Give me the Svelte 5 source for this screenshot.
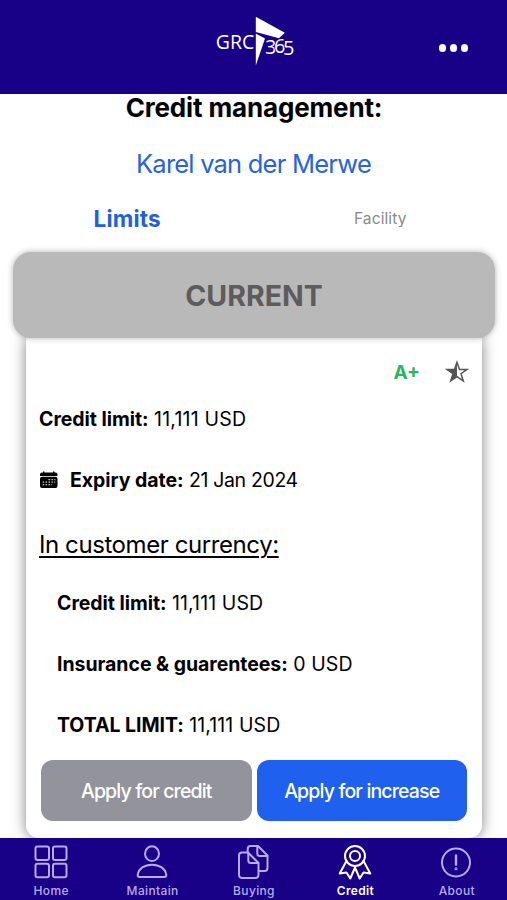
<script lang="ts">
    interface Row {
        label: string;
        value: string;
    }

    const customer = 'Karel van der Merwe';
    const tabs = ['Home', 'Maintain', 'Buying', 'Credit', 'About'];

    const currencyRows: Row[] = [
        { label: 'Credit limit:', value: '11,111 USD' },
        { label: 'Insurance & guarentees:', value: '0 USD' },
        { label: 'TOTAL LIMIT:', value: '11,111 USD' }
    ];

    let section = $state('Limits');
    let activeTab = $state('Credit');
</script>

<div class="app">
    <header class="toolbar">
        <svg class="logo" width="84" height="54" viewBox="0 0 84 54" aria-label="GRC 365">
            <path d="M43.8 2.7L72.8 18.7L67 24.3L43.8 18Z" fill="#fff" />
            <path d="M43.8 19.5L53 24.5L43.8 51.5Z" fill="#fff" />
            <text class="logo-text" x="3.8" y="35.2" font-size="20.3" textLength="38.5" lengthAdjust="spacingAndGlyphs">GRC</text>
            <text class="logo-text numbers" x="53" y="40.3" dy="0 -1.8 2.3" font-size="20" textLength="29.5" lengthAdjust="spacing">365</text>
        </svg>
        <button class="menu" aria-label="Menu">
            <i></i><i></i><i></i>
        </button>
    </header>

    <main>
        <h1>Credit management:</h1>
        <h2 class="customer">{customer}</h2>

        <div class="sections">
            <button class:selected={section === 'Limits'} onclick={() => (section = 'Limits')}>Limits</button>
            <button class:selected={section === 'Facility'} onclick={() => (section = 'Facility')}>Facility</button>
        </div>

        <div class="status">CURRENT</div>
        <section class="card">
            <div class="rating">
                <span class="grade">A+</span>
                <svg width="24" height="24" viewBox="0 0 24 24">
                    <path d="M12 2.3L14.5 9.4H22L16 13.7L18.3 20.9L12 16.6L5.7 20.9L8 13.7L2 9.4H9.5Z" fill="none" stroke="#555" stroke-width="1.5" />
                    <path d="M12 2.3V16.6L5.7 20.9L8 13.7L2 9.4H9.5Z" fill="#555" />
                </svg>
            </div>

            <div class="row"><b>Credit limit:</b><span>11,111 USD</span></div>
            <div class="row expiry">
                <svg width="20" height="20" viewBox="0 0 20 20">
                    <path d="M1 6V4.5Q1 2.5 3 2.5H4V1.5H5.5V2.5H14V1.5H15.5V2.5H16.5Q18.5 2.5 18.5 4.5V6Z" />
                    <rect x="1" y="6.8" width="17.5" height="11.2" rx="2" />
                    <path d="M9.5 9.7h6.8M3.7 12.2h12.6M3.7 14.7h9.4" stroke="#ccc" stroke-width="1.3" stroke-dasharray="1.5 1.4" />
                </svg>
                <b>Expiry date:</b><span class="date">21 Jan 2024</span>
            </div>
            <h3>In customer currency:</h3>

            {#each currencyRows as row}
                <div class="row inset"><b>{row.label}</b><span>{row.value}</span></div>
            {/each}

            <div class="actions">
                <button class="credit">Apply for credit</button>
                <button class="increase">Apply for increase</button>
            </div>
        </section>
    </main>

    <nav>
        {#each tabs as tab}
            <button class:active={activeTab === tab} onclick={() => (activeTab = tab)}>
                <svg width="36" height="36" viewBox="0 0 36 36">
                    {#if tab === 'Home'}
                        <rect x="2.5" y="1.5" width="13.5" height="13.5" rx="2" />
                        <rect x="20" y="1.5" width="13.5" height="13.5" rx="2" />
                        <rect x="2.5" y="18.7" width="13.5" height="13.5" rx="2" />
                        <rect x="20" y="18.7" width="13.5" height="13.5" rx="2" />
                    {:else if tab === 'Maintain'}
                        <ellipse cx="18" cy="8.7" rx="7" ry="7.4" />
                        <path d="M5.5 32H30.5Q32.3 32 32.3 30C31.5 23.5 25.5 19.7 18 19.7S4.5 23.5 3.7 30Q3.7 32 5.5 32Z" />
                    {:else if tab === 'Buying'}
                        <path d="M7 7.5H13L23.5 18V29.5Q23.5 33 20 33H7.5Q4 33 4 29.5V10.5Q4 7.5 7 7.5Z" />
                        <path d="M13.3 7.7V15.5Q13.3 18 15.8 18H23.3" />
                        <path d="M12.7 7.3V4Q12.7 1 15.7 1H23L32.5 10.5V23Q32.5 26 29.5 26H23.7" />
                        <path d="M22.3 1.2V8.5Q22.3 11 24.8 11H32.3" />
                    {:else if tab === 'Credit'}
                        <circle cx="18" cy="11" r="10" />
                        <circle cx="18" cy="11" r="5" />
                        <path d="M9.5 16L2.7 28.5L9.5 27.5L13.3 33.5L18 22.5L22.7 33.5L26.5 27.5L33.3 28.5L26.5 16" />
                    {:else}
                        <circle cx="18" cy="17.5" r="14" />
                        <path d="M18 10.5V19.5" stroke-width="2.4" />
                        <circle cx="18" cy="23.8" r=".5" />
                    {/if}
                </svg>
                <span>{tab}</span>
            </button>
        {/each}
    </nav>
</div>

<style>
    :global(body) {
        margin: 0;
        background: #fff;
    }

    .app {
        display: flex;
        flex-direction: column;
        height: 900px;
        overflow: hidden;
        font-family: Inter, "Liberation Sans", sans-serif;
        color: #000;
    }

    button {
        border: 0;
        padding: 0;
        background: none;
        font-family: inherit;
        color: inherit;
    }

    .toolbar {
        flex: none;
        display: grid;
        grid-template-columns: 1fr 84px 1fr;
        height: 94px;
        padding-top: 14px;
        box-sizing: border-box;
        background: #180087;
    }

    .logo {
        grid-column: 2;
    }

    .logo-text {
        fill: #fff;
        font-family: "Open Sans", sans-serif;
    }

    .numbers {
        stroke: #180087;
        stroke-width: 1.5px;
        paint-order: stroke;
    }

    .menu {
        justify-self: end;
        display: flex;
        gap: 3.5px;
        height: 68px;
        align-items: center;
        margin-right: 39px;
    }

    .menu i {
        width: 7.5px;
        height: 7.5px;
        border-radius: 50%;
        background: #fff;
    }

    main {
        flex: 1;
        min-height: 0;
    }

    h1 {
        margin: 0;
        padding-left: 1px;
        line-height: 28px;
        font-size: 26px;
        font-weight: 700;
        text-align: center;
        letter-spacing: -0.15px;
    }

    .customer {
        margin: 18px 0 0;
        line-height: 48px;
        font-size: 25.5px;
        font-weight: 400;
        letter-spacing: -0.78px;
        text-align: center;
        color: #2563e0;
    }

    .sections {
        display: grid;
        grid-template-columns: 1fr 1fr;
        height: 60px;
        margin-bottom: 4px;
    }

    .sections button {
        font-size: 15.5px;
        letter-spacing: 0.1px;
        color: #888;
    }

    .sections .selected {
        padding-left: 1px;
        font-size: 22.5px;
        font-weight: 700;
        letter-spacing: 0.2px;
        color: #2060e0;
    }

    .status {
        position: relative;
        margin: 0 12px 0 13px;
        line-height: 88px;
        height: 86px;
        border-radius: 18px;
        background: #b9b9b9;
        box-shadow: 0 0 6px rgba(0, 0, 0, 0.3);
        text-align: center;
        font-size: 28.5px;
        font-weight: 700;
        color: #5c5c5c;
    }

    .card {
        height: 500px;
        box-sizing: border-box;
        margin: 0 25px 0 26px;
        padding: 17px 13px 0;
        border-radius: 0 0 13px 13px;
        background: #fff;
        box-shadow: 0 0 14px rgba(0, 0, 0, 0.5);
    }

    .rating {
        display: flex;
        justify-content: flex-end;
        align-items: center;
        gap: 25px;
        height: 34px;
    }

    .grade {
        font-size: 19px;
        font-weight: 700;
        color: #28b463;
    }

    .row {
        display: flex;
        align-items: center;
        gap: 5.5px;
        height: 60px;
        padding-bottom: 1px;
        font-size: 19.5px;
        letter-spacing: 0.22px;
        white-space: nowrap;
    }

    .row b {
        font-weight: 650;
        letter-spacing: -0.05px;
    }

    .row .date {
        letter-spacing: -0.35px;
    }

    .expiry svg {
        margin-right: 5.5px;
    }

    .row.inset {
        height: 61px;
        padding: 0 0 0 18px;
        letter-spacing: 0.1px;
    }

    h3 {
        margin: 0;
        line-height: 67px;
        height: 61px;
        font-size: 24px;
        font-weight: 400;
        letter-spacing: -0.42px;
        text-decoration: underline;
        text-decoration-thickness: 2px;
        text-underline-offset: 3px;
    }

    .actions {
        display: grid;
        grid-template-columns: 1fr 1fr;
        gap: 5px;
        margin: 5px 2px 0;
    }

    .actions button {
        height: 61px;
        border-radius: 12px;
        font-size: 19.5px;
        font-weight: 450;
        letter-spacing: -0.85px;
        color: #fff;
    }

    .actions .credit {
        background: #92939b;
    }

    .actions .increase {
        background: #1f60ef;
    }

    nav {
        position: relative;
        flex: none;
        display: grid;
        grid-template-columns: repeat(5, 1fr);
        height: 62px;
        background: #180087;
    }

    nav button {
        display: flex;
        flex-direction: column;
        align-items: center;
        padding-top: 7px;
        color: #b9aae8;
        font-size: 12px;
        line-height: 18px;
        letter-spacing: 0.35px;
    }

    nav svg {
        fill: none;
        stroke: currentColor;
        stroke-width: 2;
        stroke-linejoin: round;
        stroke-linecap: round;
    }

    nav span {
        margin-top: 1px;
        padding-left: 1px;
        font-weight: 500;
    }

    nav .active {
        color: #fff;
    }

    .active span {
        font-weight: 600;
    }
</style>
